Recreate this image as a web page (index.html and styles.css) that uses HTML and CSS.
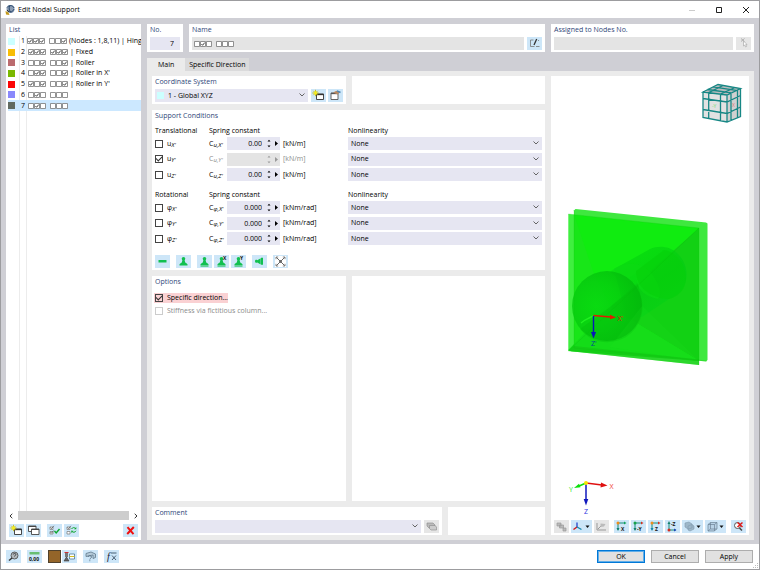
FILE: index.html
```html
<!DOCTYPE html>
<html lang="en">
<head>
<meta charset="utf-8">
<title>Edit Nodal Support</title>
<link rel="stylesheet" href="styles.css">
</head>
<body>
<svg class="defs" aria-hidden="true">
  <symbol id="off" viewBox="0 0 6 6"><path d="M.5.5h5v5h-5z" fill="#fff" stroke="#777" stroke-width=".8"/></symbol>
  <symbol id="on" viewBox="0 0 6 6"><path d="M.5.5h5v5h-5z" fill="#fff" stroke="#777" stroke-width=".8"/><path d="M1.4 3l1.2 1.3L4.7 1.6" fill="none" stroke="#333" stroke-width=".9"/></symbol>
  <symbol id="chev" viewBox="0 0 6 4"><path d="M.5.5L3 3 5.500.5" fill="none" stroke="#555" stroke-width=".9"/></symbol>
  <symbol id="spin" viewBox="0 0 12 9"><path d="M.5 2.500L2 .8l1.500 1.700zM.5 6.500L2 8.200l1.500-1.700z" fill="currentColor"/><path d="M8 2l3 2.500L8 7z" fill="currentColor"/></symbol>
  <symbol id="new" viewBox="0 0 15 13"><path d="M5.500 5h7v5.500h-7z" fill="#fff" stroke="#333" stroke-width=".9"/><path d="M5.500 5.500h7" stroke="#333" stroke-width="1.300"/><path d="M4.500.8v6.400M1.300 4h6.400M2.300 1.800l4.400 4.400M6.700 1.800L2.300 6.200" stroke="#c9bd10" stroke-width=".9"/><circle cx="4.500" cy="4" r="1.700" fill="#f3ec20"/></symbol>
  <symbol id="base" viewBox="0 0 15 13"><circle cx="7.500" cy="3.800" r="1.800"/><path d="M6.600 4.500h1.800l1 3.500H5.600zM3.500 10.500V9.200l1.700-1.500h4.600l1.700 1.500v1.300z"/></symbol>
</svg>

<div class="window">
  <header class="titlebar">
    <svg class="app-icon" viewBox="0 0 10 12"><circle cx="5.500" cy="5" r="4" fill="#8c9db4"/><path d="M2 3.500C4 .8 8 1 9 4M3 7c2 1.500 5 1 6-2M5 1.500c-1.500 2-1 5 1 7" stroke="#29496f" stroke-width="1" fill="none"/><path d="M.5 7l3 1.500 1 2.500-3.500-.5z" fill="#c49a1c"/><path d="M2 6l2 2" stroke="#333"/></svg>
    <h1>Edit Nodal Support</h1>
    <div class="window-buttons">
      <button aria-label="Minimize"><svg viewBox="0 0 8 8"><path d="M1 4.500h6" stroke="#ccc" fill="none"/></svg></button>
      <button aria-label="Maximize"><svg viewBox="0 0 8 8"><path d="M1.500 1.500h5v5h-5z" stroke="#222" fill="none"/></svg></button>
      <button aria-label="Close"><svg viewBox="0 0 8 8"><path d="M1 1l6 6M7 1L1 7" stroke="#222" fill="none"/></svg></button>
    </div>
  </header>

  <main class="workspace">
    <aside class="card list-panel">
      <h2>List</h2>
      <div class="list-area">
        <ul class="support-list">
          <li><i class="swatch cyan"></i><b>1</b><span class="dofs"><svg><use href="#on"/></svg><svg><use href="#on"/></svg><svg><use href="#on"/></svg></span><span class="dofs"><svg><use href="#off"/></svg><svg><use href="#off"/></svg><svg><use href="#on"/></svg></span><span>(Nodes : 1,8,11) | Hinged</span></li>
          <li><i class="swatch amber"></i><b>2</b><span class="dofs"><svg><use href="#on"/></svg><svg><use href="#on"/></svg><svg><use href="#on"/></svg></span><span class="dofs"><svg><use href="#on"/></svg><svg><use href="#on"/></svg><svg><use href="#on"/></svg></span><span>| Fixed</span></li>
          <li><i class="swatch rose"></i><b>3</b><span class="dofs"><svg><use href="#off"/></svg><svg><use href="#off"/></svg><svg><use href="#on"/></svg></span><span class="dofs"><svg><use href="#off"/></svg><svg><use href="#off"/></svg><svg><use href="#on"/></svg></span><span>| Roller</span></li>
          <li><i class="swatch green"></i><b>4</b><span class="dofs"><svg><use href="#off"/></svg><svg><use href="#on"/></svg><svg><use href="#on"/></svg></span><span class="dofs"><svg><use href="#off"/></svg><svg><use href="#off"/></svg><svg><use href="#on"/></svg></span><span>| Roller in X'</span></li>
          <li><i class="swatch red"></i><b>5</b><span class="dofs"><svg><use href="#on"/></svg><svg><use href="#off"/></svg><svg><use href="#on"/></svg></span><span class="dofs"><svg><use href="#off"/></svg><svg><use href="#off"/></svg><svg><use href="#on"/></svg></span><span>| Roller in Y'</span></li>
          <li><i class="swatch violet"></i><b>6</b><span class="dofs"><svg><use href="#off"/></svg><svg><use href="#on"/></svg><svg><use href="#off"/></svg></span><span class="dofs"><svg><use href="#off"/></svg><svg><use href="#off"/></svg><svg><use href="#off"/></svg></span></li>
          <li class="selected"><i class="swatch olive"></i><b>7</b><span class="dofs"><svg><use href="#off"/></svg><svg><use href="#on"/></svg><svg><use href="#off"/></svg></span><span class="dofs"><svg><use href="#off"/></svg><svg><use href="#off"/></svg><svg><use href="#off"/></svg></span></li>
        </ul>
      </div>
      <div class="scrollbar">
        <svg viewBox="0 0 4 6"><path d="M3.300.8L1 3l2.300 2.200" fill="none" stroke="#333"/></svg>
        <div class="thumb"></div>
        <svg viewBox="0 0 4 6"><path d="M.7.8L3 3 .7 5.200" fill="none" stroke="#333"/></svg>
      </div>
      <div class="list-tools">
        <button class="tool" aria-label="New"><svg><use href="#new"/></svg></button>
        <button class="tool" aria-label="Copy"><svg><path d="M2.500 2h7.500v5.500H2.500z" fill="#fff" stroke="#444" stroke-width=".9"/><path d="M2.500 2.500H10" stroke="#444"/><path d="M5.500 5h7.500v5.500H5.500z" fill="#fff" stroke="#444" stroke-width=".9"/><path d="M5.500 5.500H13" stroke="#444"/></svg></button>
        <button class="tool spaced" aria-label="Select all"><svg><path d="M3 3h3v2.500H3zM3 7.500h3V10H3z" fill="#fff" stroke="#777" stroke-width=".7"/><path d="M3.500 3.500l1 1.200L7 1.800M3.500 8l1 1.200L7 6.300" fill="none" stroke="#555" stroke-width=".7"/><path d="M7.500 7l1.700 2L12.500 5" fill="none" stroke="#10a830" stroke-width="1.400"/></svg></button>
        <button class="tool" aria-label="Invert selection"><svg><path d="M3 3h3v2.500H3zM3 7.500h3V10H3z" fill="#fff" stroke="#777" stroke-width=".7"/><path d="M3.500 3.500l1 1.200L7 1.800" fill="none" stroke="#555" stroke-width=".7"/><path d="M7.500 5c1-1.800 3-1.800 4.300-.3M12 6.800c-1 1.900-3 1.900-4.300.3" fill="none" stroke="#10a830"/><path d="M12.300 3v2.300H10zM7.300 9V6.700h2.200z" fill="#10a830"/></svg></button>
        <button class="tool push" aria-label="Delete"><svg><path d="M4.500 3.200l6 7M10.800 3L4.200 10" stroke="#f01010" stroke-width="2"/></svg></button>
      </div>
    </aside>

    <section class="editor">
      <div class="identity">
        <div class="card"><label for="no"><span class="title">No.</span></label><input id="no" class="field number" value="7"></div>
        <div class="card">
          <h2>Name</h2>
          <div class="field-row">
            <output class="field readonly" aria-label="Name"><span class="dofs"><svg><use href="#off"/></svg><svg><use href="#on"/></svg><svg><use href="#off"/></svg></span><span class="dofs"><svg><use href="#off"/></svg><svg><use href="#off"/></svg><svg><use href="#off"/></svg></span></output>
            <button class="tool" aria-label="Edit name"><svg><path d="M6.500 3H3.500v6.500h4M9 9.500h3.500M11 3.500h1" fill="none" stroke="#777" stroke-width=".8"/><path d="M9.700 2L7 8" stroke="#333" stroke-width="1.300"/></svg></button>
          </div>
        </div>
        <div class="card">
          <label for="nodes"><span class="title">Assigned to Nodes No.</span></label>
          <div class="field-row">
            <input id="nodes" class="field readonly" readonly>
            <button class="tool idle" aria-label="Pick nodes"><svg><path d="M5 1.500l3.500 3M8.500 1.500L5 4.500" stroke="#999" stroke-width=".7"/><path d="M7.500 4v5l1.200-1 .9 2 1-.5-.9-1.900h1.500z" fill="#fff" stroke="#aaa" stroke-width=".7"/></svg></button>
          </div>
        </div>
      </div>

      <nav class="tabs">
        <button class="tab active">Main</button>
        <button class="tab">Specific Direction</button>
      </nav>

      <div class="page">
        <div class="settings">
          <div class="pair">
            <div class="card">
              <label for="cs"><span class="title">Coordinate System</span></label>
              <div class="field-row">
                <div class="dropdown with-swatch"><i class="swatch cyan"></i><select id="cs"><option>1 - Global XYZ</option></select><svg class="arrow"><use href="#chev"/></svg></div>
                <button class="tool near" aria-label="New coordinate system"><svg><use href="#new"/></svg></button>
                <button class="tool near" aria-label="Edit coordinate system"><svg><path d="M3 4h7v6.500H3z" fill="#fff" stroke="#555" stroke-width=".9"/><path d="M3 4.500h7" stroke="#555" stroke-width="1.300"/><path d="M5 3.500l3.500-1.700 3 1.700-2 2z" fill="#b98a63"/><path d="M9 1.800l3.500 1.700" stroke="#4b86b5" stroke-width="1.500"/></svg></button>
              </div>
            </div>
            <div class="card"></div>
          </div>

          <div class="card support">
            <h2>Support Conditions</h2>
            <div class="group">
              <h3>Translational</h3><h3 class="spring">Spring constant</h3><h3>Nonlinearity</h3>
            </div>
            <div class="conditions">
              <div class="condition"><label class="check"><input type="checkbox"><span>u<sub>X'</sub></span></label><label for="c1">C<sub>u,X'</sub></label><span class="stepper"><input id="c1" value="0.00"><svg><use href="#spin"/></svg></span><span>[kN/m]</span><div class="dropdown"><select aria-label="Nonlinearity uX"><option>None</option></select><svg class="arrow"><use href="#chev"/></svg></div></div>
              <div class="condition"><label class="check"><input type="checkbox" checked><span>u<sub>Y'</sub></span></label><label class="dim" for="c2">C<sub>u,Y'</sub></label><span class="stepper off"><input id="c2" disabled><svg><use href="#spin"/></svg></span><span class="dim">[kN/m]</span><div class="dropdown"><select aria-label="Nonlinearity uY"><option>None</option></select><svg class="arrow"><use href="#chev"/></svg></div></div>
              <div class="condition"><label class="check"><input type="checkbox"><span>u<sub>Z'</sub></span></label><label for="c3">C<sub>u,Z'</sub></label><span class="stepper"><input id="c3" value="0.00"><svg><use href="#spin"/></svg></span><span>[kN/m]</span><div class="dropdown"><select aria-label="Nonlinearity uZ"><option>None</option></select><svg class="arrow"><use href="#chev"/></svg></div></div>
            </div>
            <div class="group second">
              <h3>Rotational</h3><h3 class="spring">Spring constant</h3><h3>Nonlinearity</h3>
            </div>
            <div class="conditions">
              <div class="condition"><label class="check"><input type="checkbox"><span>φ<sub>X'</sub></span></label><label for="c4">C<sub>φ,X'</sub></label><span class="stepper"><input id="c4" value="0.000"><svg><use href="#spin"/></svg></span><span>[kNm/rad]</span><div class="dropdown"><select aria-label="Nonlinearity phi X"><option>None</option></select><svg class="arrow"><use href="#chev"/></svg></div></div>
              <div class="condition"><label class="check"><input type="checkbox"><span>φ<sub>Y'</sub></span></label><label for="c5">C<sub>φ,Y'</sub></label><span class="stepper"><input id="c5" value="0.000"><svg><use href="#spin"/></svg></span><span>[kNm/rad]</span><div class="dropdown"><select aria-label="Nonlinearity phi Y"><option>None</option></select><svg class="arrow"><use href="#chev"/></svg></div></div>
              <div class="condition"><label class="check"><input type="checkbox"><span>φ<sub>Z'</sub></span></label><label for="c6">C<sub>φ,Z'</sub></label><span class="stepper"><input id="c6" value="0.000"><svg><use href="#spin"/></svg></span><span>[kNm/rad]</span><div class="dropdown"><select aria-label="Nonlinearity phi Z"><option>None</option></select><svg class="arrow"><use href="#chev"/></svg></div></div>
            </div>
            <div class="presets">
              <button class="tool" aria-label="Fixed"><svg><path d="M3.500 5h8v2.500h-8z"/></svg></button>
              <button class="tool spaced" aria-label="Hinged"><svg><use href="#base"/></svg></button>
              <button class="tool spaced" aria-label="Roller"><svg><use href="#base"/><path d="M3.500 11.300h8" stroke="#12c050" stroke-width=".7"/></svg></button>
              <button class="tool" aria-label="Roller in X"><svg><use href="#base"/><path d="M3.500 11.300h8" stroke="#12c050" stroke-width=".7"/><text x="9" y="5">X</text></svg></button>
              <button class="tool" aria-label="Roller in Y"><svg><use href="#base"/><path d="M3.500 11.300h8" stroke="#12c050" stroke-width=".7"/><text x="9" y="5">Y</text></svg></button>
              <button class="tool spaced" aria-label="Wall support"><svg><path d="M3 6.200c0-1.400 1.500-1.800 2.300-1L8.700 3.200V9.400L5.300 7.400C4.500 8.200 3 7.600 3 6.200zM9 2.700h2v7H9z"/></svg></button>
              <button class="tool spaced" aria-label="Free"><svg><path d="M2 1h11v11H2z" fill="#fff"/><path d="M3.500 2.500l8 8M11.500 2.500l-8 8" stroke="#555" stroke-width=".9"/><path d="M3 4.200V2h2.200M9.800 2H12v2.200M12 8.800V11H9.800M5.200 11H3V8.800" stroke="#555" stroke-width=".7" fill="none"/><circle cx="7.500" cy="6.500" r="1.400" fill="#666"/></svg></button>
            </div>
          </div>

          <div class="pair grow">
            <div class="card options">
              <h2>Options</h2>
              <label class="check marked"><input type="checkbox" checked>Specific direction...</label>
              <label class="check dim"><input type="checkbox" disabled>Stiffness via fictitious column...</label>
            </div>
            <div class="card"></div>
          </div>

          <div class="pair comment">
            <div class="card">
              <label for="comment"><span class="title">Comment</span></label>
              <div class="field-row">
                <div class="dropdown"><select id="comment"><option></option></select><svg class="arrow"><use href="#chev"/></svg></div>
                <button class="tool idle" aria-label="Comment library"><svg><path d="M3 3h6l2 2v3H5L3 6z" fill="#bbb" stroke="#888" stroke-width=".6"/><path d="M5.500 5.500H11l1.500 1.500v3H7L5.500 8.500z" fill="#ccc" stroke="#888" stroke-width=".6"/></svg></button>
              </div>
            </div>
            <div class="card"></div>
          </div>
        </div>

        <div class="card view">
          <svg class="scene" viewBox="551 76 198 444" role="img" aria-label="Support preview">
            <defs>
              <radialGradient id="ball" cx=".35" cy=".5" r=".68"><stop offset="0" stop-color="#06d80f"/><stop offset=".5" stop-color="#05cc0e"/><stop offset="1" stop-color="#03b80b"/></radialGradient>
              <linearGradient id="tube" x1="0" y1="0" x2=".7" y2="1"><stop offset="0" stop-color="#05dc0c"/><stop offset=".6" stop-color="#04cc12"/><stop offset="1" stop-color="#07d316"/></linearGradient>
            </defs>
            <g>
              <path d="M703 92l24 3v27l-24-4.500z" fill="#e2e2e2"/>
              <path d="M703 92l15-7.500 22.500 4L727 95z" fill="#b9bcbd"/>
              <path d="M727 95l13.500-6.500v28L727 122z" fill="#d0d0d0"/>
              <path d="M703 92l24 3 13.500-6.500-22.500-4zM727 95v27M703 92v25.500l24 4.500 13.500-5.500v-28M703 98.500l24 3.500 13.500-6.500M703 109.500l24 4 13.500-6.500M708.700 93v25.500M720.500 94.500V121M708.700 92.700l14.300-7.200M720.500 94.200l14.500-6.700M731 93v27.500M737.500 90v28M707.500 89.500l24 3.300M713 86.800l23 3.500" fill="none" stroke="#178785" stroke-width="1.300"/>
              <text x="712" y="108" class="tiny" fill="#78df78">-Y</text><text x="732" y="107" class="tiny" fill="#d77">X</text>
            </g>
            <g>
              <path d="M574 210.500l1.500-1.500L706 222.500l1.500 1V360l-1.500 1.500L574 348z" fill="#3fe83f"/>
              <path d="M568.300 214L699 228v137L568.300 351z" fill="#40ef40"/>
              <path d="M574 214.700L699 228v133l-125-13.500z" fill="#10ec10"/>
              <path d="M574 214.700V347.500l36-41.500-17-35z" fill="#18e618"/>
              <path d="M699 228v133l-89-54z" fill="#12d114"/>
              <path d="M699 361l-89-54-41.700 43 3 1.200z" fill="#14dc18"/>
              <path d="M614 269l36-20c8-4 20-3 27 4 11 10 13 27 4 38-3 4-8 6-12 8l-27 18-15 3z" fill="url(#tube)" opacity=".7"/>
              <path d="M610 272c14-13 36-11 45 7 6 10 6 18 3 20-15-3-23-12-22-26l-13 9z" fill="#0bda12" opacity=".7"/>
              <path d="M636 271l28-21c12 2 22 14 22 29-1 10-6 17-17 20-19-1-33-12-33-28z" fill="#05cf09" opacity=".55"/>
              <circle cx="607" cy="306" r="35" fill="url(#ball)" opacity=".8"/>
              <path d="M642 302A35 35 0 0 1 580 329l30-22 28-23z" fill="#02b60a" opacity=".3"/>
              <path d="M642 306l57 55-89-14z" fill="#20e520" opacity=".15"/>
              <path d="M568.300 351l5.700-5 125 13.500V365z" fill="#13ba13" opacity=".45"/>
              <path d="M574 348V210M568.300 214L699 228v137M574 348l133 13M699 228L568.300 351" fill="none" stroke="#0bbb0b" stroke-width=".5" opacity=".45"/>
              <path d="M593 316l-8 4-4 3" stroke="#20f020" stroke-width="1.400" fill="none"/>
              <path d="M593.500 315.500l17 1.500" stroke="#e21b00" stroke-width="1.400"/><path d="M610 314.800l6 2.700-6 1.800z" fill="#e21b00"/>
              <path d="M593.500 316v18" stroke="#0718b8" stroke-width="1.400"/><path d="M591 332h5l-2.500 6.500z" fill="#0718b8"/>
              <text x="617.500" y="320.500" fill="#d42200">X'</text><text x="591" y="346" fill="#004b95">Z'</text>
            </g>
            <g>
              <path d="M586 483l-8 3.500" stroke="#0be00b" stroke-width="1.500"/><path d="M574 488l5-4.300 1.500 3.500z" fill="#0be00b"/>
              <path d="M586 483l16 2" stroke="#df1010" stroke-width="1.500"/><path d="M601 482.500l6.500 3-7 2z" fill="#df1010"/>
              <path d="M586 483v17" stroke="#1018bd" stroke-width="1.500"/><path d="M583.700 499h4.600L586 505.500z" fill="#1018bd"/>
              <circle cx="586" cy="483" r="2" fill="#f6e700"/>
              <text x="569" y="491.500" fill="#2ae82a">Y</text><text x="609.500" y="489" fill="#ef3535">X</text><text x="584" y="514" fill="#3037e0">Z</text>
            </g>
          </svg>
          <div class="view-tools">
            <button class="tool idle" aria-label="Show parts"><svg><path d="M3 3h4v3H3zM5.500 5h4v3h-4zM9 8h3v3H9z" fill="#bbb" stroke="#999" stroke-width=".7"/></svg></button>
            <button class="tool wide" aria-label="Axes"><svg><path d="M6 7V2.500" stroke="#1438c8" stroke-width="1.200"/><path d="M6 7l-3.500 2.500" stroke="#d01818" stroke-width="1.400"/><path d="M6 7l4.500 2.500" stroke="#1687ac" stroke-width="1.400"/><path d="M14.500 5.500h4l-2 2.500z" fill="#111"/></svg></button>
            <button class="tool idle" aria-label="Dimension"><svg><path d="M3 3v7h9M4 9l4-4" stroke="#999" fill="none"/><path d="M6.500 3.500l5 .5-1.500 2.500-3.500.5z" fill="#bbb"/></svg></button>
            <button class="tool spaced" aria-label="View X"><svg><path d="M4 4v6M4 3h7" class="axis"/><path d="M2.500 8h3L4 11z" fill="#13806e"/><path d="M10 1.500v3L12.500 3z" fill="#13a35e"/><circle cx="4" cy="3" r="1.500" fill="#ef8c1c"/><text x="7" y="10.500">X</text></svg></button>
            <button class="tool" aria-label="View Y"><svg><path d="M4 4v6M4 3h7" class="axis"/><path d="M2.500 8h3L4 11z" fill="#13806e"/><path d="M10 1.500v3L12.500 3z" fill="#d32e20"/><circle cx="4" cy="3" r="1.500" fill="#17a24a"/><text x="6" y="10.500">-Y</text></svg></button>
            <button class="tool" aria-label="View Z"><svg><path d="M4 4v6M4 3h7" class="axis"/><path d="M2.500 8h3L4 11z" fill="#1687ac"/><path d="M10 1.500v3L12.500 3z" fill="#d32e20"/><circle cx="4" cy="3" r="1.500" fill="#ef8c1c"/><text x="7" y="10.500">Z</text></svg></button>
            <button class="tool" aria-label="View -Z"><svg><path d="M4 3v6M4 10h7" class="axis"/><path d="M2.500 4h3L4 1z" fill="#13806e"/><path d="M9 8.500v3l2.500-1.500z" fill="#2040bd"/><circle cx="4" cy="10" r="1.500" fill="#d32e20"/><text x="6" y="6">-Z</text></svg></button>
            <button class="tool wide" aria-label="Rendering"><svg><path d="M3 3l4-1 3 2v4L6 9 3 7zM6 6l4-1.500 2 1.500v3l-4 2-2-1z" fill="#9db7c9" stroke="#8099ad" stroke-width=".6"/><path d="M14.500 5.500h4l-2 2.500z" fill="#111"/></svg></button>
            <button class="tool wide" aria-label="Box display"><svg><path d="M3 4.500l2.500-2H12v6L9.500 11H3zM3 4.500h6.500V11M9.500 4.500l2.500-2M5.500 2.500v6.500M5.500 9H12M5.500 9L3 11" fill="#b8d2e6" stroke="#6c8194" stroke-width=".7"/><path d="M14.500 5.500h4l-2 2.500z" fill="#111"/></svg></button>
            <button class="tool spaced" aria-label="Reset view"><svg><circle cx="6.500" cy="5.500" r="3" fill="#fff" stroke="#555"/><path d="M8.500 8l2.500 2.500" stroke="#444" stroke-width="1.500"/><path d="M6.500 2.500l5 4.500M11.500 2.500l-5 4.500" stroke="#e01818" stroke-width="1.500"/></svg></button>
          </div>
        </div>
      </div>
    </section>
  </main>

  <footer class="footer">
    <button class="tool" aria-label="Help"><svg><circle cx="8.500" cy="5.500" r="3.500" fill="#b3b9be" stroke="#444" stroke-width=".8"/><path d="M6 8l-3 2.500" stroke="#333" stroke-width="1.500"/><path d="M7.300 4.500c0-1.500 2.500-1.500 2.500 0 0 1-1.300 1-1.300 2" stroke="#333" fill="none" stroke-width=".9"/></svg></button>
    <button class="tool" aria-label="Units"><svg><path d="M2.500 2h10v2.500h-10z" fill="#68be73"/><text x="2" y="11">0,00</text></svg></button>
    <button class="color" aria-label="Color"></button>
    <button class="tool" aria-label="Details"><svg><path d="M3 3h3v4H3z" fill="#777"/><path d="M2 11l2.500-4L7 11z" fill="#666" stroke="#333" stroke-width=".6"/><path d="M2.500 2.500h4" stroke="#d03030"/><path d="M7.500 4h5v5h-5z" fill="#fff" stroke="#36698a" stroke-width=".7"/><path d="M7.500 6.500h5" stroke="#d2bc1c"/></svg></button>
    <button class="tool" aria-label="View settings"><svg><path d="M3 3.500l5-1.500 4.500 2v3.500l-2.500 1V5L3 6.500z" fill="#b5cbda" stroke="#60788b" stroke-width=".8"/><path d="M5 7c0-1.800 3.500-1.800 3.500 0 0 1.300-1.700 1.200-1.700 2.500M6.800 10.300v.9" fill="none" stroke="#60788b"/></svg></button>
    <button class="tool" aria-label="Function"><svg><text x="3" y="10" class="fx">f</text><path d="M7 3h5.500M8 5.500l4 4.500M12 5.500l-4 4.500" stroke="#3b5064" stroke-width=".9"/></svg></button>
    <div class="actions">
      <button class="action primary">OK</button>
      <button class="action">Cancel</button>
      <button class="action">Apply</button>
    </div>
    <svg class="grip" viewBox="0 0 6 6"><path d="M4 0h1v1H4zM2 2h1v1H2zM4 2h1v1H4zM0 4h1v1H0zM2 4h1v1H2zM4 4h1v1H4z" fill="#bbb"/></svg>
  </footer>
</div>
</body>
</html>
```
FILE: styles.css
```css
* { box-sizing: border-box; }

body {
  margin: 0;
  font: 7px/10px "Open Sans", "Noto Sans", sans-serif;
  color: #000;
}

h1, h2, h3, ul { margin: 0; padding: 0; font: inherit; }
ul { list-style: none; }
button, input, select { font: inherit; color: inherit; margin: 0; padding: 0; border: 0; border-radius: 0; }
button { background: none; }
svg { display: block; flex: none; }
.defs { position: absolute; width: 0; height: 0; }

.window {
  display: flex;
  flex-direction: column;
  min-height: 100vh;
  border: 1px solid #9c9c9f;
  background: #fff;
}

.titlebar {
  display: flex;
  align-items: center;
  height: 17px;
  padding: 0 9px 0 4px;
  gap: 3px;
}
.titlebar h1 { color: #000; }
.app-icon { width: 10px; height: 12px; }
.window-buttons { display: flex; gap: 19px; margin-left: auto; }
.window-buttons button, .window-buttons svg { width: 8px; height: 8px; display: block; }

.workspace {
  flex: 1;
  display: grid;
  grid-template-columns: 135px minmax(0, 1fr);
  gap: 6px;
  padding: 6px 5px 4px;
  background: #cfcfd5;
}

.card { background: #fff; padding: 0 3px 2px; min-width: 0; }
h2, .title { display: block; height: 13px; line-height: 11px; color: #2f4779; }

.list-panel { display: flex; flex-direction: column; padding-bottom: 3px; }
.list-panel h2 { height: 12px; }
.list-area {
  flex: 1;
  margin: 0 -3px;
  background: linear-gradient(#ececec, #ececec) 13px 0 / 1px 100% no-repeat,
    linear-gradient(#ececec, #ececec) 20px 0 / 1px 100% no-repeat;
}
.support-list { display: grid; grid-auto-rows: 1fr; height: 75px; padding-left: 2px; }
.support-list li {
  display: flex;
  align-items: center;
  gap: 2px;
  overflow: hidden;
  white-space: nowrap;
}
.support-list b { width: 5px; margin-left: 4px; font-weight: 400; }
.support-list .dofs + .dofs { margin-left: 2px; }
.support-list .selected { background: #cce8ff; }
.swatch { flex: none; width: 7px; height: 7px; }
.dofs { display: flex; flex: none; }
.dofs svg { width: 6px; height: 6px; }
.cyan { background: #ccffff; }
.amber { background: #f7bd05; }
.rose { background: #bb6b6e; }
.green { background: #7ab800; }
.red { background: #fb0505; }
.violet { background: #8a88fb; }
.olive { background: #626a60; }

.scrollbar { display: flex; align-items: center; justify-content: space-between; gap: 5px; height: 9px; margin-bottom: 4px; }
.scrollbar svg { width: 4px; height: 6px; }
.thumb { flex: 1; height: 9px; background: #cdcdcd; }

.list-tools, .presets, .view-tools { display: flex; gap: 2px; }
.tool { flex: none; width: 15px; height: 13px; background: #cde6f8; }
.tool svg { width: 15px; height: 13px; }
.tool.wide, .tool.wide svg { width: 21px; }
.tool.idle { background: #e6e6e6; }
.tool.spaced { margin-left: 4px; }
.view-tools .spaced { margin-left: 3px; }
.tool.push { margin-left: auto; }
.tool text { font-size: 5px; font-weight: 700; fill: #111; }
.tool .fx { font: italic 10px "Liberation Serif", serif; fill: #223; }
.axis { stroke: #158c76; stroke-width: 1; fill: none; }

.editor { display: flex; flex-direction: column; min-width: 0; }
.identity { display: grid; grid-template-columns: 36px minmax(0, 1fr) 203px; gap: 6px; }
.field { display: block; width: 100%; min-width: 0; height: 13px; background: #e6e6f2; }
.number { text-align: right; padding-right: 6px; }
.readonly { display: flex; align-items: center; gap: 4px; padding-left: 2px; background: #e4e4e4; }
.field-row { display: flex; gap: 3px; }
.near + .near { margin-left: -1px; }

.tabs { display: flex; margin-top: 6px; }
.tab { height: 13px; padding: 0 4px; background: #dadadb; }
.tab.active { padding: 0 11px; background: #ebebeb; }

.page {
  flex: 1;
  display: grid;
  grid-template-columns: minmax(0, 1fr) 198px;
  gap: 6px;
  padding: 5px;
  background: #ebebeb;
}
.settings { display: flex; flex-direction: column; gap: 6px; min-width: 0; }
.pair { display: grid; grid-template-columns: 1fr 1fr; gap: 6px; }
.pair.grow { flex: 1; }
.pair.comment { grid-template-columns: 3fr 1fr; }

.dropdown { position: relative; flex: 1; min-width: 0; }
.dropdown select { display: block; width: 100%; height: 13px; padding: 0 12px 0 3px; appearance: none; background: #e6e6f2; }
.dropdown .arrow { position: absolute; right: 3px; top: 4px; width: 6px; height: 4px; pointer-events: none; }
.dropdown .swatch { position: absolute; left: 2px; top: 3px; }
.with-swatch select { padding-left: 13px; }

.group, .condition {
  display: grid;
  grid-template-columns: 54px 18px 53px 68px minmax(0, 1fr);
  align-items: center;
}
.group { margin-top: 2px; height: 12px; }
.group.second { margin-top: 8px; }
.spring { grid-column: span 3; }
.conditions { display: flex; flex-direction: column; justify-content: space-between; height: 44px; }
.condition > span:nth-child(4) { padding-left: 3px; }
sub { font-size: 6px; line-height: 0; vertical-align: -1px; font-style: italic; }
.dim { color: #8b8b8b; }

.stepper { display: flex; align-items: center; height: 13px; background: #e6e6f2; padding-right: 1px; }
.stepper input { flex: 1; min-width: 0; height: 13px; text-align: right; padding-right: 5px; background: transparent; }
.stepper svg { width: 12px; height: 9px; }
.stepper.off { background: #e4e4e4; color: #999; }

.check { display: flex; align-items: center; gap: 4px; }
.check input {
  appearance: none;
  display: grid;
  place-items: center;
  width: 8px;
  height: 8px;
  border: 1px solid #444;
  background: #fff;
}
.check input:checked::after {
  content: "";
  width: 5px;
  height: 3px;
  border: solid #333;
  border-width: 0 0 1px 1px;
  transform: translateY(-1px) rotate(-45deg);
}
.check input:disabled { border-color: #ccc; }
.presets { margin-top: 10px; }
.presets svg { fill: #12c050; }

.options { display: flex; flex-direction: column; align-items: flex-start; gap: 3px; }
.options h2 { margin-bottom: 1px; }
.marked { background: #fad1d3; box-shadow: -1px 0 #fad1d3; }
.marked input { background: #fad1d3; }

.view { display: flex; flex-direction: column; }
.scene { flex: 1; width: calc(100% + 6px); margin: 0 -3px; min-height: 0; }
.scene text { font-size: 7px; }
.scene .tiny { font-size: 5px; }

.footer { display: flex; align-items: center; height: 25px; padding: 0 6px 0 5px; gap: 6px; position: relative; }
.color { width: 13px; height: 13px; background: #946529; border: 1px solid #50412c; margin-right: -5px; }
.actions { display: flex; gap: 6px; margin-left: auto; }
.action { width: 48px; height: 13px; border: 1px solid #adadad; background: #e1e1e1; line-height: 11px; }
.action.primary { border-color: #0078d7; outline: 1px solid #62aee8; outline-offset: -2px; }
.grip { position: absolute; right: 0; bottom: 0; width: 6px; height: 6px; }
```
